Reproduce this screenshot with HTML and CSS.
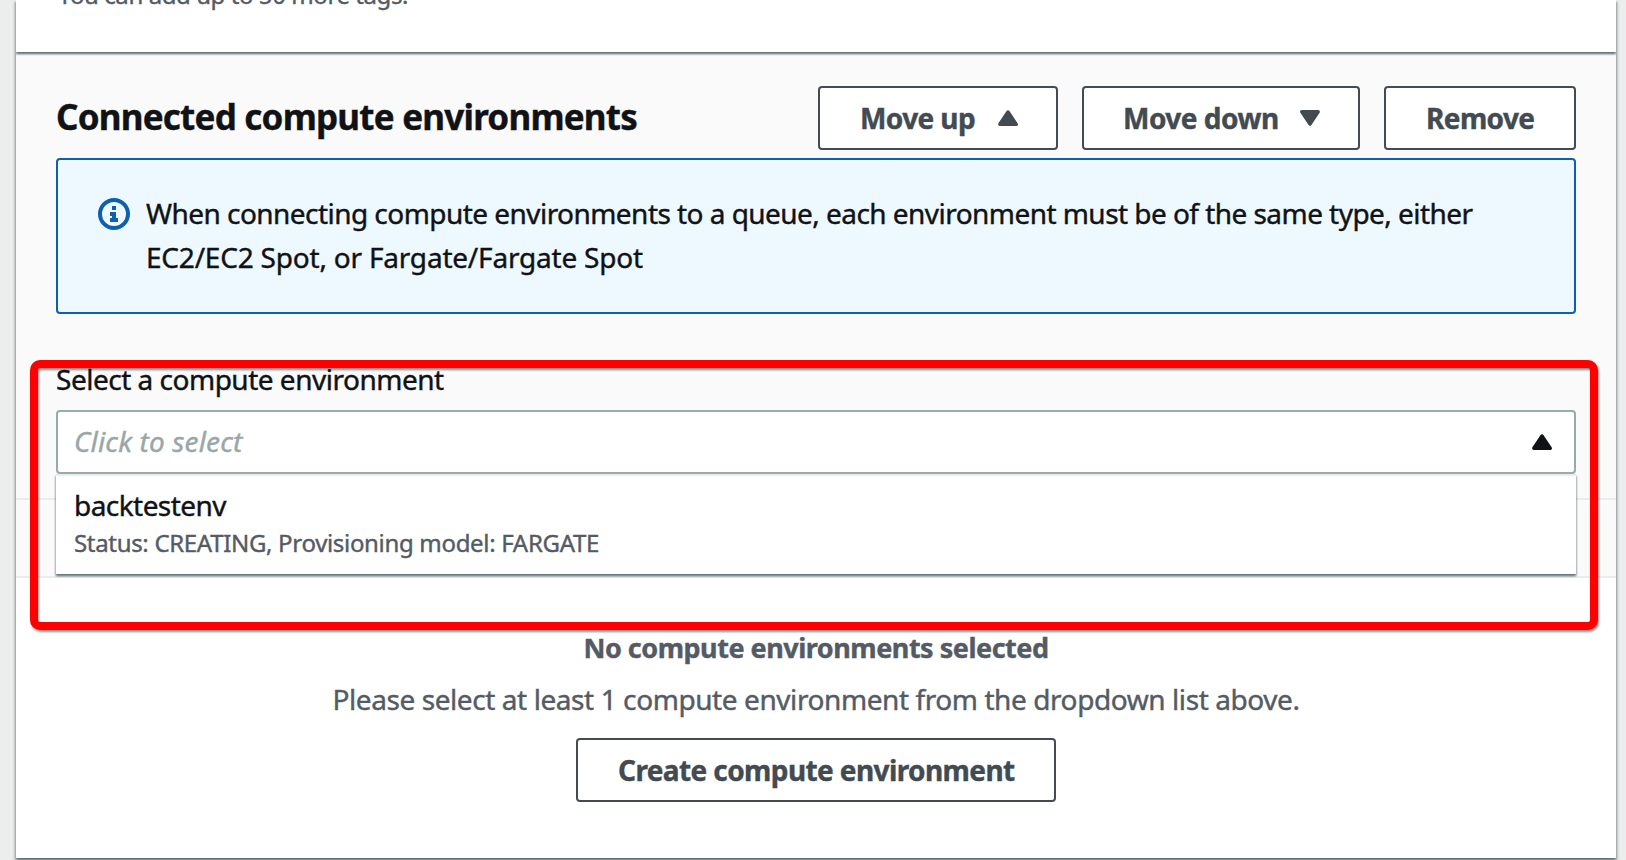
FILE: index.html
```html
<!DOCTYPE html>
<html lang="en">
<head>
<meta charset="utf-8">
<title>Connected compute environments</title>
<link rel="stylesheet" href="styles.css">
</head>
<body>
<main class="page">
  <section class="card tags">
    <p class="tags-hint">You can add up to 50 more tags.</p>
  </section>
  <section class="card environments">
    <div class="head">
      <div class="title-row">
        <h2 class="title">Connected compute environments</h2>
        <div class="actions">
          <button class="btn btn-up"><span>Move up</span><svg class="caret" viewBox="0 0 20 16"><path d="M1.800 14.300 10 2l8.200 12.300z"/></svg></button>
          <button class="btn btn-down"><span class="down-text">Move down</span><svg class="caret" viewBox="0 0 20 16"><path d="M1.800 1.700h16.400L10 14z"/></svg></button>
          <button class="btn btn-remove"><span>Remove</span></button>
        </div>
      </div>
      <div class="alert">
        <svg class="info" viewBox="0 0 32 32"><circle cx="16" cy="16" r="14"/><path d="M14 8h4v4h-4zM12 14h6v6h2v4h-8v-4h2v-2h-2z"/></svg>
        <p class="alert-text">When connecting compute environments to a queue, each environment must be of the same type, either<br><span class="alert-second">EC2/EC2 Spot, or Fargate/Fargate Spot</span></p>
      </div>
      <div class="field">
        <div class="label">Select a compute environment</div>
        <div class="select">
          <span class="placeholder">Click to select</span>
          <svg class="caret" viewBox="0 0 20 16"><path d="M1.800 14.300 10 2l8.200 12.300z"/></svg>
        </div>
        <div class="menu">
          <div class="option-name">backtestenv</div>
          <div class="option-meta">Status: CREATING, Provisioning model: FARGATE</div>
        </div>
      </div>
    </div>
    <div class="table-head"></div>
    <div class="empty">
      <div class="empty-title">No compute environments selected</div>
      <div class="empty-text">Please select at least 1 compute environment from the dropdown list above.</div>
      <button class="btn btn-create"><span>Create compute environment</span></button>
    </div>
  </section>
  <div class="highlight"></div>
</main>
</body>
</html>
```
FILE: styles.css
```css
* { box-sizing: border-box; margin: 0; }

body {
  background: #eceeed;
  color: #101216;
  font: 28px/44px "Noto Sans", "Open Sans", sans-serif;
  -webkit-text-stroke: .4px currentColor;
  overflow: hidden;
}

.page {
  position: relative;
  height: 860px;
  padding: 0 10px 0 16px;
  overflow: hidden;
}

.card {
  width: 1600px;
  background: #fff;
  box-shadow: 0 2px 2px 0 rgba(0, 28, 36, .4), 2px 2px 2px 0 rgba(0, 28, 36, .2), -2px 2px 2px 0 rgba(0, 28, 36, .2);
}

.tags {
  display: flow-root;
  position: relative;
  z-index: 1;
  height: 52px;
}

.tags-hint {
  margin-top: -23px;
  padding-left: 42px;
  color: #545b64;
  font-size: 24px;
  line-height: 36px;
  letter-spacing: -.425px;
}

.environments { height: 806px; }

.head {
  height: 448px;
  padding: 34px 40px 0;
  background: #fafafa;
  border-bottom: 2px solid #eaeded;
}

.title-row {
  display: flex;
  justify-content: space-between;
  height: 72px;
}

.title {
  font-size: 35px;
  line-height: 62px;
  font-weight: 700;
  letter-spacing: -.78px;
  white-space: nowrap;
}

.actions { display: flex; gap: 24px; }

.btn {
  display: flex;
  align-items: center;
  height: 64px;
  padding: 0 40px;
  background: #fff;
  border: 2px solid #454b54;
  border-radius: 4px;
  color: #424a52;
  font: 700 28px/44px "Noto Sans", "Open Sans", sans-serif;
  letter-spacing: -.6px;
  white-space: nowrap;
}

.btn-up { width: 240px; justify-content: space-between; padding-right: 38px; }
.btn-down { width: 278px; justify-content: space-between; padding-right: 38px; padding-left: 39px; }
.btn-remove { width: 192px; }
.down-text { letter-spacing: -.5px; }

.caret {
  width: 20px;
  height: 16px;
  flex: none;
  fill: currentColor;
  stroke: currentColor;
  stroke-width: 3.4;
  stroke-linejoin: round;
}

.alert {
  display: flex;
  gap: 16px;
  height: 156px;
  padding: 31px 0 0 40px;
  background: #eef9ff;
  border: 2px solid #0e5fae;
  border-radius: 4px;
}

.info { width: 32px; height: 32px; margin-top: 7px; flex: none; }
.info circle { fill: none; stroke: #0e5fae; stroke-width: 4; }
.info path { fill: #0e5fae; }

.alert-text { letter-spacing: -.545px; white-space: nowrap; }
.alert-second { letter-spacing: -.206px; }

.field { position: relative; margin-top: 48px; }

.label {
  height: 48px;
  line-height: 34px;
  letter-spacing: -.494px;
}

.select {
  display: flex;
  align-items: center;
  justify-content: space-between;
  height: 64px;
  padding: 0 22px 2px 16px;
  background: #fff;
  border: 2px solid #99aaab;
  border-radius: 4px;
}

.select .caret { margin-top: 2px; }
.placeholder { color: #99a7a8; font-style: italic; letter-spacing: .143px; }

.menu {
  position: absolute;
  top: 112px;
  left: 0;
  right: 0;
  height: 100px;
  padding: 11px 0 0 18px;
  background: #fff;
  border-top: 2px solid #eaeded;
  box-shadow: 0 2px 2px 0 rgba(0, 28, 36, .4), 1px 2px 2px 0 rgba(0, 28, 36, .2), -1px 2px 2px 0 rgba(0, 28, 36, .2);
}

.option-name { line-height: 36px; letter-spacing: -.56px; }
.option-meta {
  margin-top: 2px;
  color: #545b64;
  font-size: 24px;
  line-height: 36px;
  letter-spacing: -.323px;
}

.table-head {
  height: 78px;
  background: #fafafa;
  border-bottom: 2px solid #eaeded;
}

.empty {
  display: flex;
  flex-direction: column;
  align-items: center;
  padding-top: 48px;
  color: #545b64;
}

.empty-title { height: 51px; font-size: 27px; font-weight: 700; letter-spacing: -.48px; }
.empty-text { height: 61px; letter-spacing: -.418px; }
.btn-create { width: 480px; }

/* Annotation frame over the select field */
.highlight {
  position: absolute;
  left: 30px;
  top: 360px;
  width: 1568px;
  height: 270px;
  border: 8px solid #f00;
  border-radius: 10px;
  filter: drop-shadow(1px 2px 1px rgba(0, 0, 0, .45));
}
```
